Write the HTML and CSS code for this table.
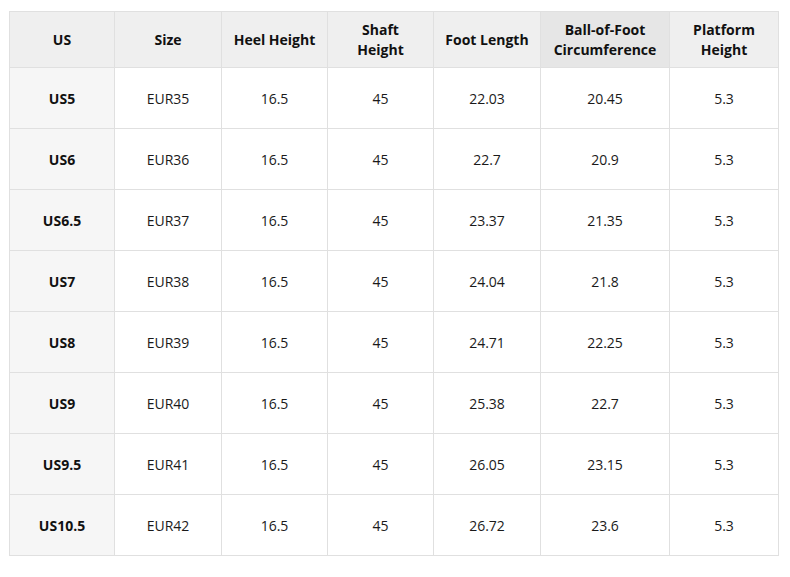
FILE: index.html
```html
<!DOCTYPE html>
<html>
<head>
<meta charset="utf-8">
<link rel="stylesheet" href="styles.css">
</head>
<body>
<div class="wrap">
<table class="size-table">
  <colgroup>
    <col class="c1"><col class="c2"><col class="c3"><col class="c4"><col class="c5"><col class="c6"><col class="c7">
  </colgroup>
  <thead>
    <tr>
      <th>US</th>
      <th>Size</th>
      <th>Heel Height</th>
      <th>Shaft<br>Height</th>
      <th>Foot Length</th>
      <th class="hl">Ball-of-Foot<br>Circumference</th>
      <th>Platform<br>Height</th>
    </tr>
  </thead>
  <tbody>
    <tr><td class="us">US5</td><td>EUR35</td><td>16.5</td><td>45</td><td>22.03</td><td>20.45</td><td>5.3</td></tr>
    <tr><td class="us">US6</td><td>EUR36</td><td>16.5</td><td>45</td><td>22.7</td><td>20.9</td><td>5.3</td></tr>
    <tr><td class="us">US6.5</td><td>EUR37</td><td>16.5</td><td>45</td><td>23.37</td><td>21.35</td><td>5.3</td></tr>
    <tr><td class="us">US7</td><td>EUR38</td><td>16.5</td><td>45</td><td>24.04</td><td>21.8</td><td>5.3</td></tr>
    <tr><td class="us">US8</td><td>EUR39</td><td>16.5</td><td>45</td><td>24.71</td><td>22.25</td><td>5.3</td></tr>
    <tr><td class="us">US9</td><td>EUR40</td><td>16.5</td><td>45</td><td>25.38</td><td>22.7</td><td>5.3</td></tr>
    <tr><td class="us">US9.5</td><td>EUR41</td><td>16.5</td><td>45</td><td>26.05</td><td>23.15</td><td>5.3</td></tr>
    <tr><td class="us">US10.5</td><td>EUR42</td><td>16.5</td><td>45</td><td>26.72</td><td>23.6</td><td>5.3</td></tr>
  </tbody>
</table>
</div>
</body>
</html>
```
FILE: styles.css
```css
html, body {
  margin: 0;
  padding: 0;
  background: #ffffff;
}
.wrap {
  padding: 11px 0 0 9px;
}
.size-table {
  border-collapse: collapse;
  table-layout: fixed;
  width: 769px;
  font-family: "Open Sans", "Noto Sans", sans-serif;
  font-size: 14px;
  color: #1a1a1a;
}
.c1 { width: 105px; }
.c2 { width: 107px; }
.c3 { width: 106px; }
.c4 { width: 106px; }
.c5 { width: 107px; }
.c6 { width: 129px; }
.c7 { width: 109px; }
.size-table th,
.size-table td {
  border: 1px solid #e0e0e0;
  text-align: center;
  vertical-align: middle;
  padding: 0 4px;
}
.size-table th {
  background: #efefef;
  font-weight: 700;
  color: #111;
  height: 55px;
  line-height: 20px;
}
.size-table th.hl {
  background: #e6e6e6;
}
.size-table td {
  height: 60px;
}
.size-table td.us {
  background: #f6f6f6;
  font-weight: 700;
  color: #111;
}
```
